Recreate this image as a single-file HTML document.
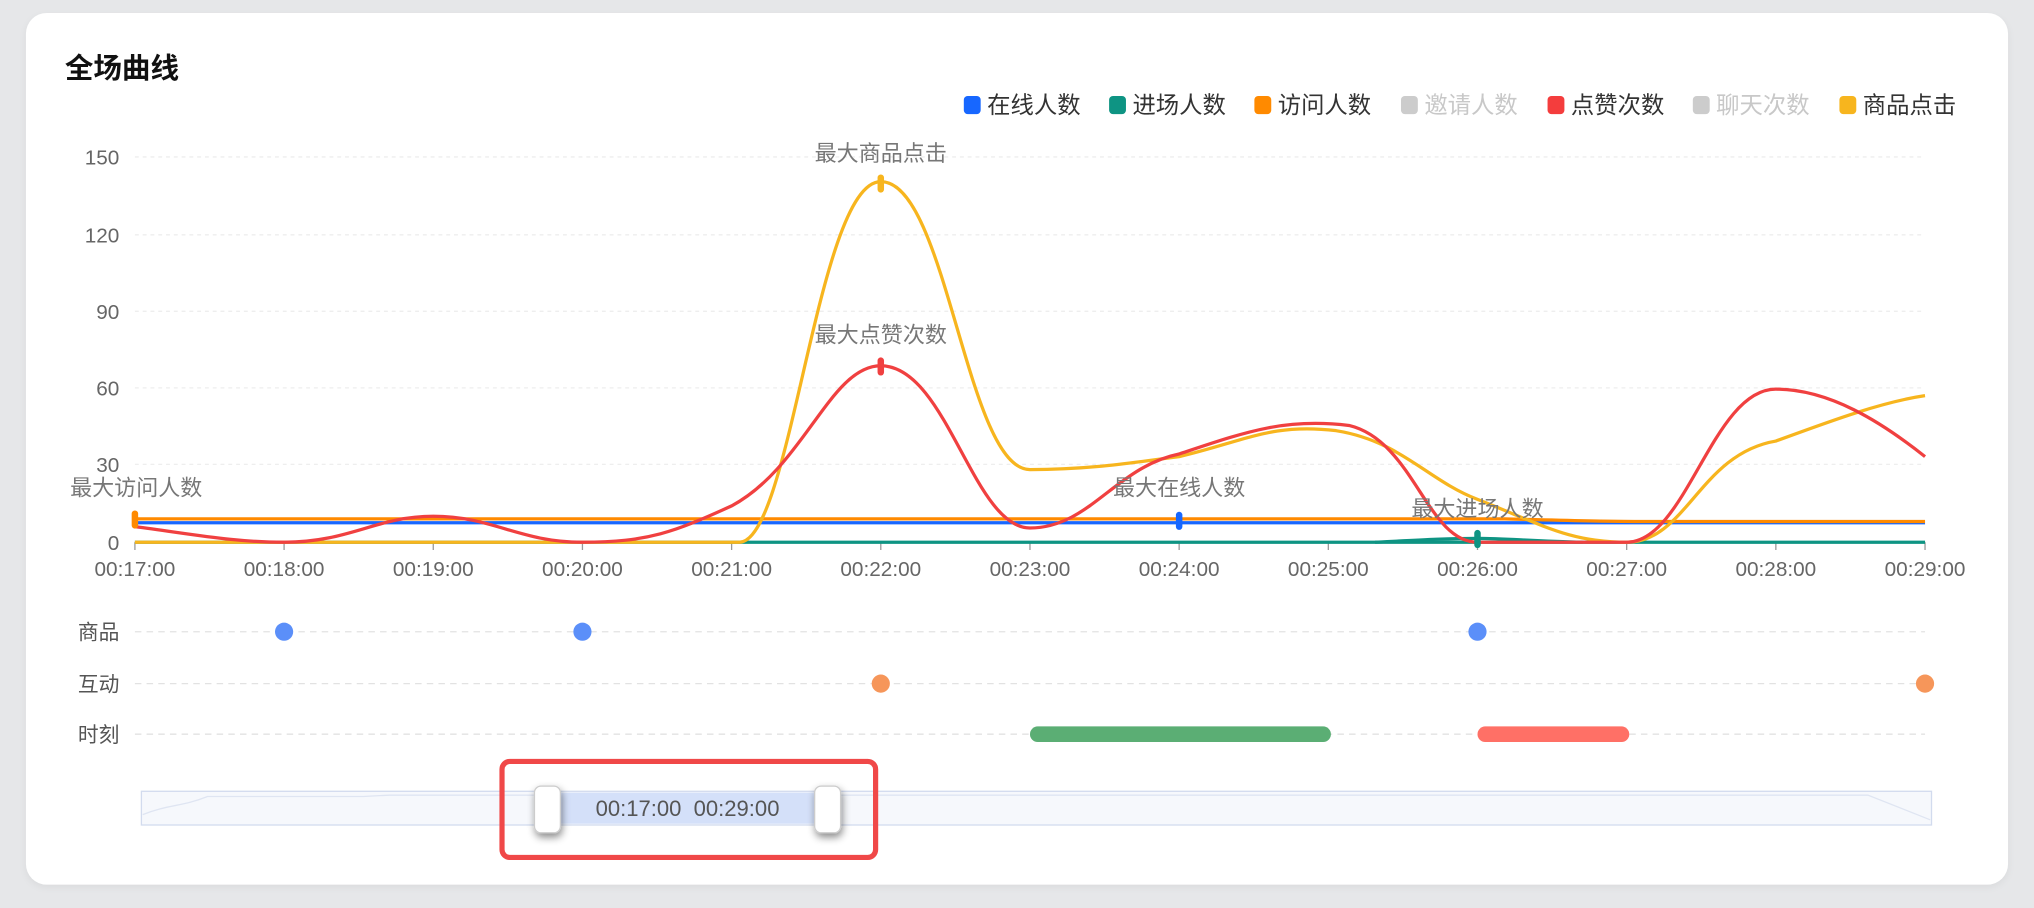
<!DOCTYPE html>
<html><head><meta charset="utf-8"><style>
html,body{margin:0;padding:0;width:2034px;height:908px;overflow:hidden;background:#e6e7e9;}
#w{position:absolute;left:0;top:0;width:1568px;height:700px;transform:scale(1.29719);transform-origin:0 0;font-family:"Liberation Sans","Noto Sans CJK SC",sans-serif;}
.card{position:absolute;left:20px;top:10px;width:1528px;height:672px;background:#fff;border-radius:16px;box-shadow:0 2px 6px rgba(0,0,0,.05);}
.title{position:absolute;left:50px;top:35px;font-size:22px;font-weight:bold;color:#111;}
.lg{position:absolute;top:67px;font-size:18px;color:#333;white-space:nowrap;}
.lg i{display:inline-block;width:13px;height:14px;border-radius:3px;vertical-align:-1px;margin-right:5px;}
.off{color:#c8c8c8;}
</style></head><body><div id="w">
<div class="card"></div>
<div class="title">全场曲线</div>
<div class="lg" style="left:743px"><i style="background:#1767ff"></i>在线人数</div>
<div class="lg" style="left:855px"><i style="background:#0e9483"></i>进场人数</div>
<div class="lg" style="left:967px"><i style="background:#ff8a00"></i>访问人数</div>
<div class="lg off" style="left:1080px"><i style="background:#cccccc"></i>邀请人数</div>
<div class="lg" style="left:1193px"><i style="background:#f43d3d"></i>点赞次数</div>
<div class="lg off" style="left:1305px"><i style="background:#cccccc"></i>聊天次数</div>
<div class="lg" style="left:1418px"><i style="background:#f7b51e"></i>商品点击</div>
<svg style="position:absolute;left:0;top:0" width="1568" height="700" font-family="Liberation Sans,Noto Sans CJK SC,sans-serif" font-size="16" fill="#666">
<g stroke="#eee" stroke-dasharray="3 3" stroke-width="1">
<line x1="104" x2="1484" y1="121" y2="121"/><line x1="104" x2="1484" y1="181" y2="181"/><line x1="104" x2="1484" y1="240" y2="240"/><line x1="104" x2="1484" y1="299" y2="299"/><line x1="104" x2="1484" y1="358" y2="358"/>
</g>
<g text-anchor="end"><text x="92" y="127">150</text><text x="92" y="187">120</text><text x="92" y="246">90</text><text x="92" y="305">60</text><text x="92" y="364">30</text><text x="92" y="424">0</text></g>
<line x1="104" x2="1484" y1="418" y2="418" stroke="#999"/>
<g stroke="#999"><line x1="104" x2="104" y1="418" y2="424"/><line x1="219" x2="219" y1="418" y2="424"/><line x1="334" x2="334" y1="418" y2="424"/><line x1="449" x2="449" y1="418" y2="424"/><line x1="564" x2="564" y1="418" y2="424"/><line x1="679" x2="679" y1="418" y2="424"/><line x1="794" x2="794" y1="418" y2="424"/><line x1="909" x2="909" y1="418" y2="424"/><line x1="1024" x2="1024" y1="418" y2="424"/><line x1="1139" x2="1139" y1="418" y2="424"/><line x1="1254" x2="1254" y1="418" y2="424"/><line x1="1369" x2="1369" y1="418" y2="424"/><line x1="1484" x2="1484" y1="418" y2="424"/></g>
<g text-anchor="middle"><text x="104" y="444">00:17:00</text><text x="219" y="444">00:18:00</text><text x="334" y="444">00:19:00</text><text x="449" y="444">00:20:00</text><text x="564" y="444">00:21:00</text><text x="679" y="444">00:22:00</text><text x="794" y="444">00:23:00</text><text x="909" y="444">00:24:00</text><text x="1024" y="444">00:25:00</text><text x="1139" y="444">00:26:00</text><text x="1254" y="444">00:27:00</text><text x="1369" y="444">00:28:00</text><text x="1484" y="444">00:29:00</text></g>
<g fill="none" stroke-width="2.5">
<path d="M104 418 L1484 418" stroke="#0e9483"/>
<path d="M1060 418 C1100 416 1120 415 1139 415 C1160 415 1180 417 1220 418" stroke="#0e9483"/>
<path d="M104 403 L1484 403" stroke="#1767ff"/>
<path d="M104 400 L1160 400 C1200 401 1230 402 1260 402 L1484 402" stroke="#ff8a00"/>
<path d="M104 418 L570 418 C610 418 630 140 679 140 C730 140 745 362 794 362 C840 362 870 357 909 352 C960 340 980 326 1030 332 C1080 340 1100 370 1139 385 C1190 405 1210 418 1254 418 C1300 418 1310 350 1369 340 C1410 325 1450 310 1484 305" stroke="#f7b51e"/>
<path d="M104 406 C150 412 180 418 219 418 C270 418 290 398 334 398 C380 398 400 418 449 418 C500 418 520 410 564 390 C620 360 640 282 679 282 C730 282 750 407 794 407 C840 407 860 360 909 350 C960 333 990 322 1040 328 C1090 340 1100 418 1139 418 L1254 418 C1300 418 1320 300 1369 300 C1410 300 1450 325 1484 352" stroke="#f04040"/>
</g>
<g stroke-width="5" stroke-linecap="round">
<line x1="104" x2="104" y1="396" y2="405" stroke="#ff8a00"/>
<line x1="909" x2="909" y1="397" y2="406" stroke="#1767ff"/>
<line x1="1139" x2="1139" y1="411" y2="420" stroke="#0e9483"/>
<line x1="679" x2="679" y1="278" y2="287" stroke="#f04040"/>
<line x1="679" x2="679" y1="137" y2="146" stroke="#f7b51e"/>
</g>
<g text-anchor="middle" fill="#777" font-size="17"><text x="679" y="124">最大商品点击</text><text x="679" y="264">最大点赞次数</text><text x="105" y="382">最大访问人数</text><text x="909" y="382">最大在线人数</text><text x="1139" y="398">最大进场人数</text></g>
<g stroke="#e2e2e2" stroke-dasharray="5 4"><line x1="104" x2="1484" y1="487" y2="487"/><line x1="104" x2="1484" y1="527" y2="527"/><line x1="104" x2="1484" y1="566" y2="566"/></g>
<g text-anchor="end" fill="#555"><text x="92" y="493">商品</text><text x="92" y="533">互动</text><text x="92" y="572">时刻</text></g>
<g fill="#5b8ff9"><circle cx="219" cy="487" r="7"/><circle cx="449" cy="487" r="7"/><circle cx="1139" cy="487" r="7"/></g>
<g fill="#f6965a"><circle cx="679" cy="527" r="7"/><circle cx="1484" cy="527" r="7"/></g>
<line x1="800" x2="1020" y1="566" y2="566" stroke="#5bae74" stroke-width="12" stroke-linecap="round"/>
<line x1="1145" x2="1250" y1="566" y2="566" stroke="#ff7066" stroke-width="12" stroke-linecap="round"/>
<rect x="109" y="610" width="1380" height="26" fill="#f6f8fc" stroke="#d2dbee"/>
<path d="M110 628 C130 620 140 622 160 614 L280 614 L300 613 L1440 613 L1488 632" fill="none" stroke="#dfe5f2"/>
<rect x="422" y="611" width="216" height="24" fill="#d4e0f9"/>
<text x="530" y="629" text-anchor="middle" fill="#555" font-size="17" xml:space="preserve">00:17:00  00:29:00</text>
<defs><filter id="sh" x="-1" y="-1" width="3" height="3"><feDropShadow dx="1" dy="3" stdDeviation="3" flood-opacity=".45"/></filter></defs>
<rect x="412" y="606" width="20" height="36" rx="5" fill="#fff" stroke="#ccc" filter="url(#sh)"/>
<rect x="628" y="606" width="20" height="36" rx="5" fill="#fff" stroke="#ccc" filter="url(#sh)"/>
<rect x="387" y="587" width="288" height="74" rx="6" fill="none" stroke="#f04848" stroke-width="4"/>
</svg>
</div></body></html>
